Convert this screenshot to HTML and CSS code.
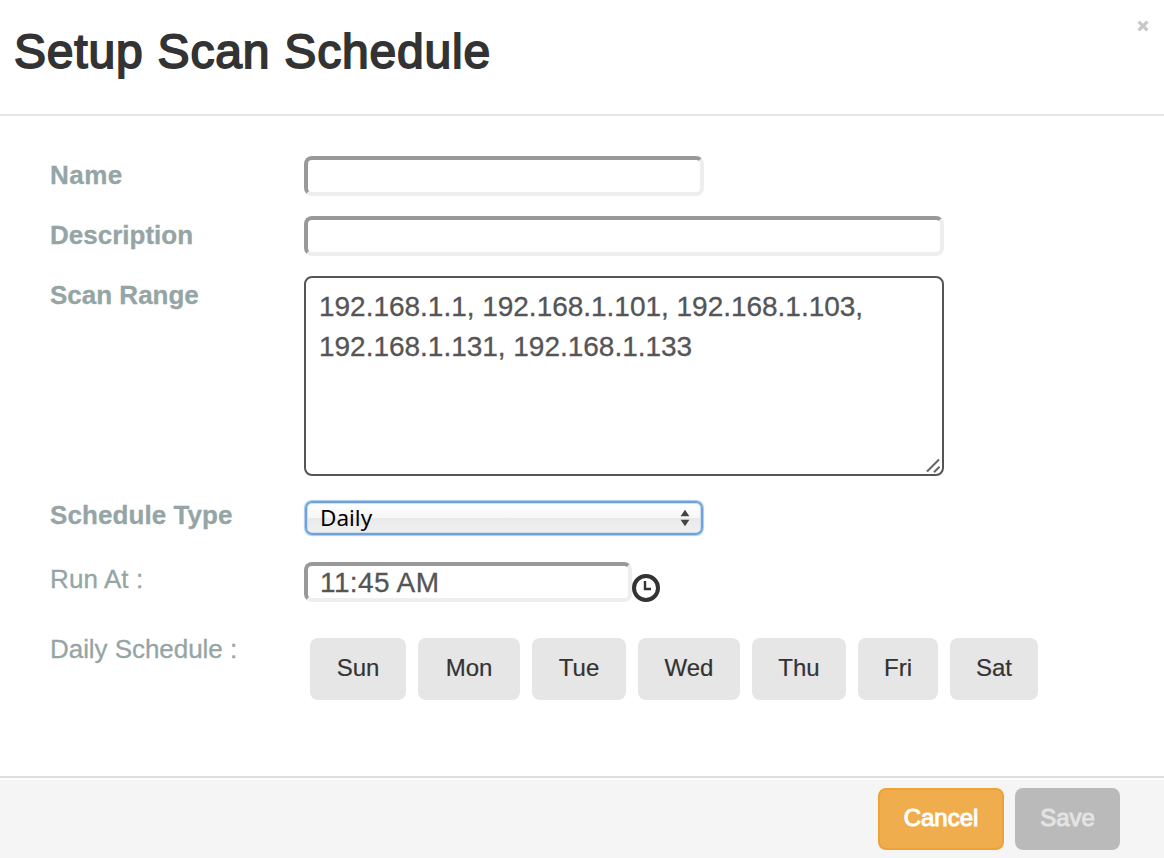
FILE: index.html
```html
<!DOCTYPE html>
<html lang="en">
<head>
<meta charset="utf-8">
<title>Setup Scan Schedule</title>
<link rel="stylesheet" href="styles.css">
</head>
<body>
<div class="modal">
  <header class="modal-header">
    <h1 class="title">Setup Scan Schedule</h1>
    <button class="close" type="button" aria-label="Close">
      <svg width="12" height="12" viewBox="0 0 12 12"><path d="M1.6 1.6 10.4 10.4M10.4 1.6 1.6 10.4" stroke="#c8c8c8" stroke-width="3.2"/></svg>
    </button>
  </header>
  <main class="modal-body">
    <div class="row row-name">
      <label class="label name-label" for="name">Name</label>
      <input class="field field-short" id="name" type="text">
    </div>
    <div class="row row-name">
      <label class="label" for="desc">Description</label>
      <input class="field field-long" id="desc" type="text">
    </div>
    <div class="row row-range">
      <label class="label" for="range">Scan Range</label>
      <div class="range-wrap">
        <textarea class="range" id="range" spellcheck="false">192.168.1.1, 192.168.1.101, 192.168.1.103, 192.168.1.131, 192.168.1.133</textarea>
        <svg class="grip" width="16" height="16" viewBox="0 0 16 16"><path d="M1 13.5 13 1.5M8 14.2 13.5 8.7" stroke="#666" stroke-width="2.1" fill="none"/></svg>
      </div>
    </div>
    <div class="row row-type">
      <span class="label">Schedule Type</span>
      <div class="select" role="combobox" tabindex="0">
        <span>Daily</span>
        <svg width="10" height="18" viewBox="0 0 10 18"><path d="M5 .8 9.4 7.2H.6zM.6 10.8h8.8L5 17.2z" fill="#444"/></svg>
      </div>
    </div>
    <div class="row row-time">
      <label class="label label-light" for="time">Run At :</label>
      <input class="field field-time" id="time" type="text" value="11:45 AM">
      <svg class="clock" width="28" height="28" viewBox="0 0 28 28" fill="none" stroke="#333"><circle cx="14" cy="14" r="12" stroke-width="4"/><path d="M13 7v8h6" stroke-width="2.4"/></svg>
    </div>
    <div class="row row-days">
      <span class="label label-light">Daily Schedule :</span>
      <div class="days">
        <button class="day sun" type="button">Sun</button>
        <button class="day mon" type="button">Mon</button>
        <button class="day tue" type="button">Tue</button>
        <button class="day wed" type="button">Wed</button>
        <button class="day thu" type="button">Thu</button>
        <button class="day fri" type="button">Fri</button>
        <button class="day sat" type="button">Sat</button>
      </div>
    </div>
  </main>
  <footer class="modal-footer">
    <button class="btn cancel" type="button">Cancel</button>
    <button class="btn save" type="button">Save</button>
  </footer>
</div>
</body>
</html>
```

FILE: styles.css
```css
* { box-sizing: border-box; }

body {
  margin: 0;
  background: #fff;
  font-family: "Liberation Sans", Arial, sans-serif;
}

button, input, textarea { font-family: inherit; margin: 0; }

.modal {
  display: flex;
  flex-direction: column;
  height: 858px;
  overflow: hidden;
}

.modal-header {
  display: flex;
  justify-content: space-between;
  align-items: flex-start;
  height: 116px;
  padding: 20px 15px 0 14px;
  border-bottom: 2px solid #e5e5e5;
}

.title {
  margin: 0;
  font-size: 48px;
  line-height: 64px;
  font-weight: 400;
  letter-spacing: 0.8px;
  color: #333;
  -webkit-text-stroke: 1.8px #333;
}

.close {
  display: flex;
  padding: 0;
  border: 0;
  background: none;
}

.modal-body {
  display: flex;
  flex-direction: column;
  height: 660px;
  padding: 40px 50px 0;
}

.row { display: flex; align-items: flex-start; }
.row-name { height: 60px; }
.row-range { height: 224px; }
.row-type { height: 62px; }
.row-time { height: 76px; }

.label {
  width: 254px;
  flex: none;
  font-size: 26px;
  line-height: 38px;
  font-weight: 700;
  color: #95a5a6;
  -webkit-text-stroke: 0.3px #95a5a6;
  white-space: nowrap;
}

.name-label { letter-spacing: 0.5px; }
.row-type .label { margin-top: -4px; letter-spacing: 0.08px; }
.row-time .label { margin-top: -2px; letter-spacing: 0.1px; }
.row-days .label { margin-top: -8px; letter-spacing: -0.05px; }
.label-light { font-weight: 400; }

.field {
  height: 40px;
  padding: 0 12px;
  border: 4px solid;
  border-color: #999 #eee #eee #999;
  border-radius: 8px;
  background: #fff;
  font-size: 28px;
  color: #555;
  outline: none;
}

.field-short { width: 400px; }
.field-long { width: 640px; }

.field-time {
  width: 328px;
  padding-top: 1px;
  letter-spacing: 0.4px;
  -webkit-text-stroke: 0.3px #555;
}

.range-wrap { position: relative; width: 640px; height: 200px; }

.range {
  display: block;
  width: 640px;
  height: 200px;
  padding: 9px 12px 8px 13px;
  border: 2px solid #555;
  border-radius: 8px;
  resize: none;
  overflow: hidden;
  outline: none;
  font-size: 28px;
  line-height: 40px;
  letter-spacing: -0.02px;
  color: #555;
  -webkit-text-stroke: 0.3px #555;
}

.grip { position: absolute; right: 2px; bottom: 2px; }

.select {
  display: flex;
  justify-content: space-between;
  align-items: center;
  width: 398px;
  height: 34px;
  margin: 1px;
  padding: 0 11px 0 13px;
  border: 2px solid #6fa3d6;
  border-radius: 7px;
  background: linear-gradient(#fff 0, #f7f7f7 50%, #e9e9e9 51%, #f1f1f1 100%);
  box-shadow: 0 0 1px 1px #a9c9ea, inset 0 0 1px 1px #c9dcf0;
  font: 22.5px/30px "Noto Sans", "Open Sans", sans-serif;
  color: #000;
  outline: none;
}

.clock { margin: 12px 0 0; }

.days { display: flex; gap: 12px; padding-left: 6px; }

.day, .btn {
  height: 62px;
  padding: 0 0 3px;
  border: 0;
  border-radius: 8px;
  font-size: 24px;
}

.day { background: #e6e6e6; color: #333; -webkit-text-stroke: 0.2px #333; }
.sun { width: 96px; }
.mon, .wed { width: 102px; }
.tue, .thu { width: 94px; }
.fri { width: 80px; }
.sat { width: 88px; }

.modal-footer {
  display: flex;
  justify-content: flex-end;
  gap: 11px;
  height: 82px;
  padding: 8px 44px 0;
  border-top: 2px solid #ddd;
  box-shadow: inset 0 2px #fff;
  background: #f5f5f5;
}

.modal-footer .btn { margin-top: 2px; }

.cancel {
  width: 126px;
  border: 2px solid #eea236;
  background: #f0ad4e;
  color: #fff;
  -webkit-text-stroke: 1px #fff;
}

.save {
  width: 105px;
  background: #bababa;
  color: #e3e3e3;
  -webkit-text-stroke: 1px #e3e3e3;
}
```
